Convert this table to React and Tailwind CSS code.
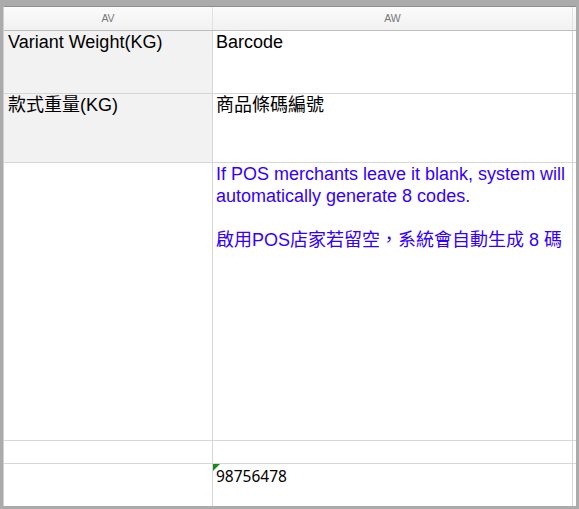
// Spreadsheet fragment: columns AV / AW of a product import sheet
const SANS = "font-['Liberation_Sans','Noto_Sans_CJK_TC',sans-serif]";

function Cell({ className = '', children }) {
  return (
    <div lang="zh-Hant-TW" className={`border-r border-[#d6d6d6] px-[4px] leading-[22px] text-[18px] ${SANS} ${className}`}>
      {children}
    </div>
  );
}

function Row({ h, children }) {
  return (
    <div className={`flex border-b border-[#d6d6d6] ${h}`}>
      {children}
    </div>
  );
}

export default function App() {
  return (
    <div className="w-[579px] h-[509px] bg-[#ababab] pt-[6px] pl-[3px] pr-[3px] pb-[3px] overflow-hidden">
      <div className="h-full bg-white border-t border-[#8e8e8e] border-l border-l-[#cfcfcf] flex flex-col overflow-hidden">
        {/* column header */}
        <div className="flex h-[24px] shrink-0 border-b border-[#bdbdbd] bg-gradient-to-b from-[#fbfbfb] to-[#f1f1f1]">
          <div className={`w-[209px] shrink-0 border-r border-[#e2e2e2] flex items-center justify-center text-[10.5px] text-[#777] ${SANS}`}>AV</div>
          <div className={`w-[360px] shrink-0 border-r border-[#e2e2e2] flex items-center justify-center text-[10.5px] text-[#777] ${SANS}`}>AW</div>
          <div className="flex-1" />
        </div>

        <Row h="h-[63px] shrink-0">
          <Cell className="w-[209px] shrink-0 bg-[#f2f2f2] text-black">Variant Weight(KG)</Cell>
          <Cell className="w-[360px] shrink-0 pl-[3px] text-black">Barcode</Cell>
          <div className="flex-1" />
        </Row>

        <Row h="h-[69px] shrink-0">
          <Cell className="w-[209px] shrink-0 bg-[#f2f2f2] text-black">款式重量(KG)</Cell>
          <Cell className="w-[360px] shrink-0 pl-[3px] text-black">商品條碼編號</Cell>
          <div className="flex-1" />
        </Row>

        <Row h="h-[278px] shrink-0">
          <Cell className="w-[209px] shrink-0" />
          <Cell className="w-[360px] shrink-0 pl-[3px] pr-[2px] text-[#3300ff]">
            <p>If POS merchants leave it blank, system will automatically generate 8 codes.</p>
            <p className="h-[22px]" />
            <p>啟用POS店家若留空，系統會自動生成 8 碼</p>
          </Cell>
          <div className="flex-1" />
        </Row>

        <Row h="h-[23px] shrink-0">
          <Cell className="w-[209px] shrink-0" />
          <Cell className="w-[360px] shrink-0" />
          <div className="flex-1" />
        </Row>

        <div className="flex flex-1">
          <Cell className="w-[209px] shrink-0" />
          <div className="relative w-[360px] shrink-0 border-r border-[#d6d6d6] pl-[3px] pt-[1px] font-['Noto_Sans',sans-serif] text-[15.5px] leading-[22px] text-black">
            {/* text-number indicator */}
            <span className="absolute left-0 top-0 w-0 h-0 border-t-[7px] border-t-[#1a8a1a] border-r-[7px] border-r-transparent" />
            98756478
          </div>
          <div className="flex-1" />
        </div>
      </div>
    </div>
  );
}
